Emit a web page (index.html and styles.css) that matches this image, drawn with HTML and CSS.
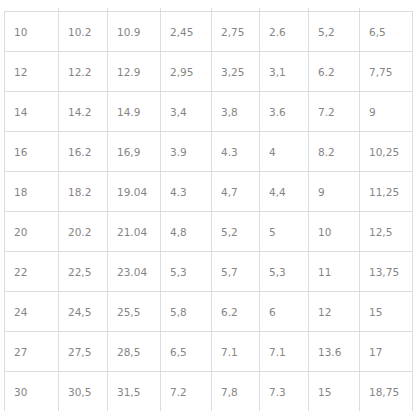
FILE: index.html
```html
<!DOCTYPE html>
<html>
<head>
<meta charset="utf-8">
<link rel="stylesheet" href="styles.css">
</head>
<body>
<div class="wrap">
<table class="sizes">
<colgroup>
<col class="c1"><col class="c2"><col class="c3"><col class="c4"><col class="c5"><col class="c6"><col class="c7"><col class="c8">
</colgroup>
<tbody>
<tr class="stub"><td></td><td></td><td></td><td></td><td></td><td></td><td></td><td></td></tr>
<tr><td>10</td><td>10.2</td><td>10.9</td><td>2,45</td><td>2,75</td><td>2.6</td><td>5,2</td><td>6,5</td></tr>
<tr><td>12</td><td>12.2</td><td>12.9</td><td>2,95</td><td>3,25</td><td>3,1</td><td>6.2</td><td>7,75</td></tr>
<tr><td>14</td><td>14.2</td><td>14.9</td><td>3,4</td><td>3,8</td><td>3.6</td><td>7.2</td><td>9</td></tr>
<tr><td>16</td><td>16.2</td><td>16,9</td><td>3.9</td><td>4.3</td><td>4</td><td>8.2</td><td>10,25</td></tr>
<tr><td>18</td><td>18.2</td><td>19.04</td><td>4.3</td><td>4,7</td><td>4,4</td><td>9</td><td>11,25</td></tr>
<tr><td>20</td><td>20.2</td><td>21.04</td><td>4,8</td><td>5,2</td><td>5</td><td>10</td><td>12,5</td></tr>
<tr><td>22</td><td>22,5</td><td>23.04</td><td>5,3</td><td>5,7</td><td>5,3</td><td>11</td><td>13,75</td></tr>
<tr><td>24</td><td>24,5</td><td>25,5</td><td>5,8</td><td>6.2</td><td>6</td><td>12</td><td>15</td></tr>
<tr><td>27</td><td>27,5</td><td>28,5</td><td>6,5</td><td>7.1</td><td>7.1</td><td>13.6</td><td>17</td></tr>
<tr><td>30</td><td>30,5</td><td>31,5</td><td>7.2</td><td>7,8</td><td>7.3</td><td>15</td><td>18,75</td></tr>
</tbody>
</table>
</div>
</body>
</html>
```

FILE: styles.css
```css
html, body {
  margin: 0;
  padding: 0;
  background: #ffffff;
}

.wrap {
  padding: 8px 0 0 4px;
}

.sizes {
  border-collapse: separate;
  border-spacing: 0;
  table-layout: fixed;
  width: 409px;
  font-family: "DejaVu Sans", Verdana, sans-serif;
  font-size: 10.5px;
  color: #858585;
}

.c1 { width: 54px; }
.c2 { width: 49px; }
.c3 { width: 53px; }
.c4 { width: 51px; }
.c5 { width: 48px; }
.c6 { width: 49px; }
.c7 { width: 51px; }
.c8 { width: 54px; }

.sizes td {
  box-sizing: border-box;
  height: 40px;
  padding: 0 0 0 9px;
  border-top: 1px solid #dddddd;
  border-left: 1px solid #dddddd;
  vertical-align: middle;
  white-space: nowrap;
}

.sizes td:last-child {
  border-right: 1px solid #dddddd;
}

.sizes .stub td {
  height: 3px;
  border-top: none;
}

.sizes .stub td:first-child {
  border-left: none;
}

.sizes .stub td:last-child {
  border-right: none;
}
```
